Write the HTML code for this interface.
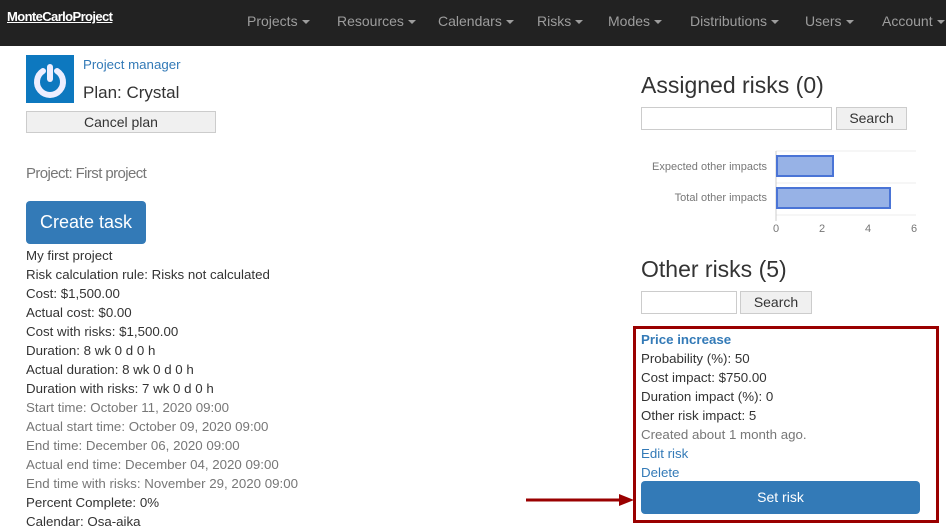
<!DOCTYPE html>
<html><head><meta charset="utf-8"><style>
*{margin:0;padding:0;box-sizing:border-box}
body{width:946px;height:529px;overflow:hidden;background:#fff;font-family:"Liberation Sans",sans-serif;font-size:13.3px;color:#333;position:relative}
.a{position:absolute;white-space:nowrap}
.nav{position:absolute;left:0;top:0;width:946px;height:46px;background:#222}
.ni{position:absolute;top:13px;color:#9d9d9d;font-size:14px}
.car{display:inline-block;width:0;height:0;border-left:4px solid transparent;border-right:4px solid transparent;border-top:4px solid #9d9d9d;vertical-align:middle;margin-left:4px}
.l{color:#337ab7}
.g{color:#777}
.btn{position:absolute;background:#337ab7;color:#fff;border-radius:4px;text-align:center}
.inp{position:absolute;border:1px solid #ccc;background:#fff}
.sb{position:absolute;border:1px solid #ccc;background:#f0f0f0;text-align:center;font-size:14px;color:#333}
</style></head><body>
<div class="nav">
<div class="a" style="left:7px;top:9px;color:#fff;font-weight:bold;font-size:13px;text-decoration:underline;letter-spacing:-0.6px">MonteCarloProject</div>
<div class="ni" style="left:247px">Projects<span class="car"></span></div>
<div class="ni" style="left:337px">Resources<span class="car"></span></div>
<div class="ni" style="left:438px">Calendars<span class="car"></span></div>
<div class="ni" style="left:537px">Risks<span class="car"></span></div>
<div class="ni" style="left:608px">Modes<span class="car"></span></div>
<div class="ni" style="left:690px">Distributions<span class="car"></span></div>
<div class="ni" style="left:805px">Users<span class="car"></span></div>
<div class="ni" style="left:882px">Account<span class="car"></span></div>
</div>
<svg class="a" style="left:26px;top:55px" width="48" height="48"><rect width="48" height="48" fill="#0d78bf"/><path d="M17 16 A13 13 0 1 0 31 16" fill="none" stroke="#eef" stroke-width="6" stroke-linecap="round"/><line x1="24" y1="12" x2="24" y2="24" stroke="#eef" stroke-width="6" stroke-linecap="round"/></svg>
<div class="a l" style="left:83px;top:57px">Project manager</div>
<div class="a" style="left:83px;top:83px;font-size:17px">Plan: Crystal</div>
<div class="sb" style="left:26px;top:111px;width:190px;height:22px;line-height:20px">Cancel plan</div>
<div class="a g" style="left:26px;top:165px;font-size:15px;letter-spacing:-0.6px">Project: First project</div>
<div class="btn" style="left:26px;top:201px;width:120px;height:43px;line-height:43px;font-size:18px">Create task</div>
<div class="a" style="left:26px;top:246px;line-height:19px">
My first project<br>Risk calculation rule: Risks not calculated<br>Cost: $1,500.00<br>Actual cost: $0.00<br>Cost with risks: $1,500.00<br>Duration: 8 wk 0 d 0 h<br>Actual duration: 8 wk 0 d 0 h<br>Duration with risks: 7 wk 0 d 0 h<br>
<span class="g">Start time: October 11, 2020 09:00<br>Actual start time: October 09, 2020 09:00<br>End time: December 06, 2020 09:00<br>Actual end time: December 04, 2020 09:00<br>End time with risks: November 29, 2020 09:00</span><br>Percent Complete: 0%<br>Calendar: Osa-aika</div>
<div class="a" style="left:641px;top:72px;font-size:23px">Assigned risks (0)</div>
<div class="inp" style="left:641px;top:107px;width:191px;height:23px"></div>
<div class="sb" style="left:836px;top:107px;width:71px;height:23px;line-height:21px">Search</div>
<svg class="a" style="left:630px;top:145px" width="316" height="95">
<line x1="146" y1="6" x2="286" y2="6" stroke="#eee"/><line x1="146" y1="38" x2="286" y2="38" stroke="#eee"/><line x1="146" y1="70" x2="286" y2="70" stroke="#eee"/>
<line x1="146" y1="6" x2="146" y2="76" stroke="#ccc"/>
<rect x="147" y="11" width="56" height="20" fill="#97b2e6" stroke="#4a74d6" stroke-width="2"/>
<rect x="147" y="43" width="113" height="20" fill="#97b2e6" stroke="#4a74d6" stroke-width="2"/>
<g font-family="Liberation Sans" font-size="11" fill="#777">
<text x="137" y="25" text-anchor="end">Expected other impacts</text>
<text x="137" y="56" text-anchor="end">Total other impacts</text>
<text x="146" y="87" text-anchor="middle">0</text><text x="192" y="87" text-anchor="middle">2</text><text x="238" y="87" text-anchor="middle">4</text><text x="284" y="87" text-anchor="middle">6</text></g></svg>
<div class="a" style="left:641px;top:256px;font-size:23px">Other risks (5)</div>
<div class="inp" style="left:641px;top:291px;width:96px;height:23px"></div>
<div class="sb" style="left:740px;top:291px;width:72px;height:23px;line-height:21px">Search</div>
<div class="a" style="left:633px;top:326px;width:306px;height:197px;border:3px solid #9a0000"></div>
<div class="a" style="left:641px;top:330px;line-height:19px"><b class="l">Price increase</b><br>Probability (%): 50<br>Cost impact: $750.00<br>Duration impact (%): 0<br>Other risk impact: 5<br><span class="g">Created about 1 month ago.</span><br><span class="l">Edit risk</span><br><span class="l">Delete</span></div>
<div class="btn" style="left:641px;top:481px;width:279px;height:33px;line-height:33px;font-size:14px">Set risk</div>
<svg class="a" style="left:525px;top:492px" width="110" height="16"><line x1="1" y1="8" x2="96" y2="8" stroke="#9a0000" stroke-width="3"/><polygon points="94,2 109,8 94,14" fill="#9a0000"/></svg>
</body></html>
